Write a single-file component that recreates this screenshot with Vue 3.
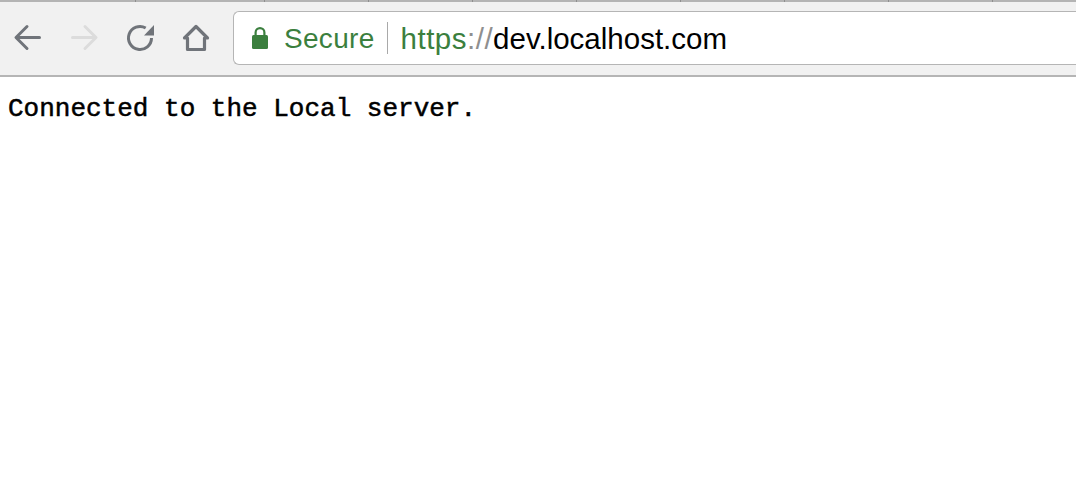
<script setup>
// tab strip separators: widths between the little ticks along the top edge
const tabWidths = [136, 129, 104, 104, 104, 104, 104, 104, 104]
</script>

<template>
  <div class="page">
    <div class="tabstrip">
      <span v-for="(w, i) in tabWidths" :key="i" class="tab" :style="{ width: w + 'px' }"></span>
    </div>
    <header class="toolbar">
      <nav class="nav">
        <button class="btn">
          <svg width="32" height="32" viewBox="0 0 32 32" fill="none" stroke="#70747a" stroke-width="3" stroke-linecap="round" stroke-linejoin="round">
            <path d="M27.500 15.500H4.500M15 4.500 4 15.500 15 26.500" />
          </svg>
        </button>
        <button class="btn">
          <svg width="32" height="32" viewBox="0 0 32 32" fill="none" stroke="#dcdcdc" stroke-width="3" stroke-linecap="round" stroke-linejoin="round">
            <path d="M4.500 15.500H27.500M17 4.500 28 15.500 17 26.500" />
          </svg>
        </button>
        <button class="btn">
          <svg width="32" height="32" viewBox="0 0 32 32" fill="none">
            <path d="M21.700 6A11.500 11.500 0 1 0 27.500 16" stroke="#70747a" stroke-width="3" />
            <path d="M20 13.500H30V3Z" fill="#70747a" />
          </svg>
        </button>
        <button class="btn">
          <svg width="32" height="32" viewBox="0 0 32 32" fill="none" stroke="#70747a" stroke-width="3.200" stroke-linejoin="round" stroke-linecap="round">
            <path d="M4.500 16 16 4.500 27.500 16H24.500V27.500H7.500V16Z" />
          </svg>
        </button>
      </nav>
      <div class="omnibox">
        <svg class="lock" width="16" height="22" viewBox="0 0 16 22">
          <path d="M3.600 9V5.500a4.400 4.400 0 0 1 8.800 0V9" fill="none" stroke="#3b7f3e" stroke-width="2.200" />
          <rect x="0" y="8" width="16" height="14" rx="1.500" fill="#3b7f3e" />
        </svg>
        <span class="secure">Secure</span>
        <span class="divider"></span>
        <span class="url"><span class="scheme">https</span><span class="sep">://</span>dev.localhost.com</span>
      </div>
    </header>
    <main class="content">Connected to the Local server.</main>
  </div>
</template>

<style scoped>
.page {
  width: 1076px;
  height: 496px;
  overflow: hidden;
  background: #fff;
}
.tabstrip {
  display: flex;
  height: 2px;
  background: #b4b4b4;
}
.tab {
  height: 2px;
  border-right: 1px solid #8e8e8e;
  box-sizing: border-box;
}
.toolbar {
  display: flex;
  align-items: center;
  height: 75px;
  box-sizing: border-box;
  border-bottom: 2px solid #b5b5b5;
  background: #f1f1f1;
  padding: 0 0 1px 12px;
}
.nav {
  display: flex;
  gap: 24px;
  width: 221px;
  flex: none;
}
.btn {
  display: flex;
  width: 32px;
  height: 32px;
  padding: 0;
  border: 0;
  background: none;
}
.omnibox {
  display: flex;
  align-items: center;
  flex: 1;
  height: 54px;
  box-sizing: border-box;
  border: 1px solid #b5b5b5;
  border-right: 0;
  border-radius: 6px 0 0 6px;
  background: #fff;
  padding-left: 18px;
  font-family: "Liberation Sans", Arial, sans-serif;
}
.lock {
  flex: none;
}
.secure {
  margin-left: 16px;
  padding-top: 2px;
  font-size: 28px;
  letter-spacing: 0.3px;
  color: #3b7f3e;
}
.divider {
  width: 1px;
  height: 32px;
  margin: 0 13px 0 12px;
  background: #a9a9a9;
}
.scheme {
  letter-spacing: 0.5px;
  color: #3b7f3e;
}
.sep {
  letter-spacing: 0.5px;
  color: #8f8f8f;
}
.url {
  padding-top: 2px;
  font-size: 29.500px;
  color: #000;
}
.content {
  padding: 17px 0 0 8px;
  font-family: "Liberation Mono", "Courier New", monospace;
  font-size: 26px;
  line-height: 30px;
  color: #000;
  -webkit-text-stroke: 0.5px #000;
}
</style>
